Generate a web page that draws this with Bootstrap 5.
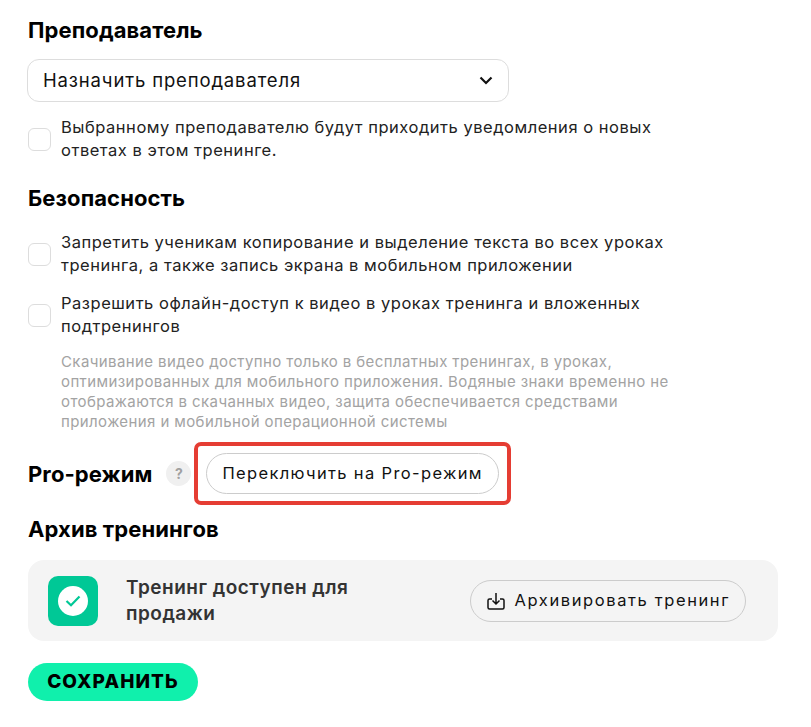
<!DOCTYPE html>
<html lang="ru">
<head>
<meta charset="utf-8">
<title>Настройки</title>
<link rel="stylesheet" href="https://cdn.jsdelivr.net/npm/bootstrap@5.3.0/dist/css/bootstrap.min.css">
<style>
html,body{background:#fff;}
body{font-family:"Inter","Noto Sans",sans-serif;color:#111;overflow:hidden;}
.pane{width:811px;height:727px;padding:17px 33px 0 28px;}
.sect-title{font-size:22px;font-weight:700;line-height:26px;color:#000;margin:0;letter-spacing:.1px;}
.pick{width:482px;height:43px;margin:16px 0 0 -1px;border:1px solid #ddd;border-radius:12px;padding:0 15px;font-size:18.5px;letter-spacing:.85px;color:#111;background:#fff;}
.tick{width:23px;height:23px;border:1px solid #ddd;border-radius:6px;background:#fff;flex:none;}
.tick-row{gap:10px;width:650px;font-size:16.5px;letter-spacing:.52px;line-height:23px;color:#222;}
.tick-row-first{margin-top:14px;}
.sect-gap-a{margin-top:23px;}
.tick-row-b{margin-top:20px;}
.tick-row-c{margin-top:15px;}
.hint{margin:14px 0 0 33px;width:625px;font-size:15px;letter-spacing:.4px;line-height:20px;color:#a3a3a3;}
.pro-line{margin-top:10px;}
.ask{width:25px;height:25px;border-radius:50%;background:#f0f0f0;color:#a0a0a0;font-size:14px;font-weight:700;margin-left:14px;}
.frame{border:4px solid #e53d33;border-radius:7px;padding:7px 8px;margin-left:3px;}
.pill{height:41px;border:1px solid #ccc;border-radius:21px;background:transparent;font-size:16.5px;color:#111;padding:0 15px;letter-spacing:1.35px;white-space:nowrap;}
.sect-gap-b{margin-top:11px;}
.archive{height:81px;border-radius:16px;background:#f4f4f4;padding:0 32px 0 20px;margin-top:18px;}
.okbox{width:50px;height:50px;border-radius:10px;background:#00c896;flex:none;}
.okdot{width:30px;height:30px;border-radius:50%;background:#fff;}
.arc-text{width:270px;margin-left:28px;font-size:19px;letter-spacing:.5px;font-weight:600;line-height:26px;color:#333;}
.pill-arc{gap:9px;height:42px;letter-spacing:1.6px;}
.savebtn{height:38px;width:170px;border:0;border-radius:19px;background:#10f0ac;font-size:19px;font-weight:800;color:#000;letter-spacing:1.1px;margin-top:22px;padding:0;}
</style>
</head>
<body>
<div class="pane">
  <h2 class="sect-title">Преподаватель</h2>
  <div class="pick d-flex align-items-center justify-content-between">
    <span>Назначить преподавателя</span>
    <svg width="14" height="9" viewBox="0 0 14 9" fill="none"><path d="M1.500 1.500 7 7l5.500-5.500" stroke="#111" stroke-width="2.2"/></svg>
  </div>
  <div class="tick-row tick-row-first d-flex align-items-center">
    <span class="tick"></span>
    <div>Выбранному преподавателю будут приходить уведомления о новых ответах в этом тренинге.</div>
  </div>
  <h2 class="sect-title sect-gap-a">Безопасность</h2>
  <div class="tick-row tick-row-b d-flex align-items-center">
    <span class="tick"></span>
    <div>Запретить ученикам копирование и выделение текста во всех уроках тренинга, а также запись экрана в мобильном приложении</div>
  </div>
  <div class="tick-row tick-row-c d-flex align-items-center">
    <span class="tick"></span>
    <div>Разрешить офлайн-доступ к видео в уроках тренинга и вложенных подтренингов</div>
  </div>
  <p class="hint">Скачивание видео доступно только в бесплатных тренингах, в уроках, оптимизированных для мобильного приложения. Водяные знаки временно не отображаются в скачанных видео, защита обеспечивается средствами приложения и мобильной операционной системы</p>
  <div class="pro-line d-flex align-items-center">
    <h2 class="sect-title">Pro-режим</h2>
    <span class="ask d-flex align-items-center justify-content-center">?</span>
    <div class="frame"><button type="button" class="pill d-flex align-items-center">Переключить на Pro-режим</button></div>
  </div>
  <h2 class="sect-title sect-gap-b">Архив тренингов</h2>
  <div class="archive d-flex align-items-center">
    <div class="okbox d-flex align-items-center justify-content-center">
      <div class="okdot d-flex align-items-center justify-content-center">
        <svg width="16" height="12" viewBox="0 0 16 12" fill="none"><path d="M1.500 6 6 10.200 14.500 1.500" stroke="#00c896" stroke-width="2.2"/></svg>
      </div>
    </div>
    <div class="arc-text">Тренинг доступен для продажи</div>
    <button type="button" class="pill pill-arc d-flex align-items-center ms-auto">
      <svg width="20" height="20" viewBox="0 0 20 20" fill="none" stroke="#111" stroke-width="1.5"><path d="M6 8H3.500A1.500 1.500 0 0 0 2 9.500v7A1.500 1.500 0 0 0 3.500 18h13a1.500 1.500 0 0 0 1.500-1.500v-7A1.500 1.500 0 0 0 16.500 8H14M10 2v11M6.500 9.500 10 13l3.500-3.500"/></svg>
      Архивировать тренинг
    </button>
  </div>
  <button type="button" class="savebtn d-block">СОХРАНИТЬ</button>
</div>
<script src="https://cdn.jsdelivr.net/npm/bootstrap@5.3.0/dist/js/bootstrap.bundle.min.js"></script>
</body>
</html>
